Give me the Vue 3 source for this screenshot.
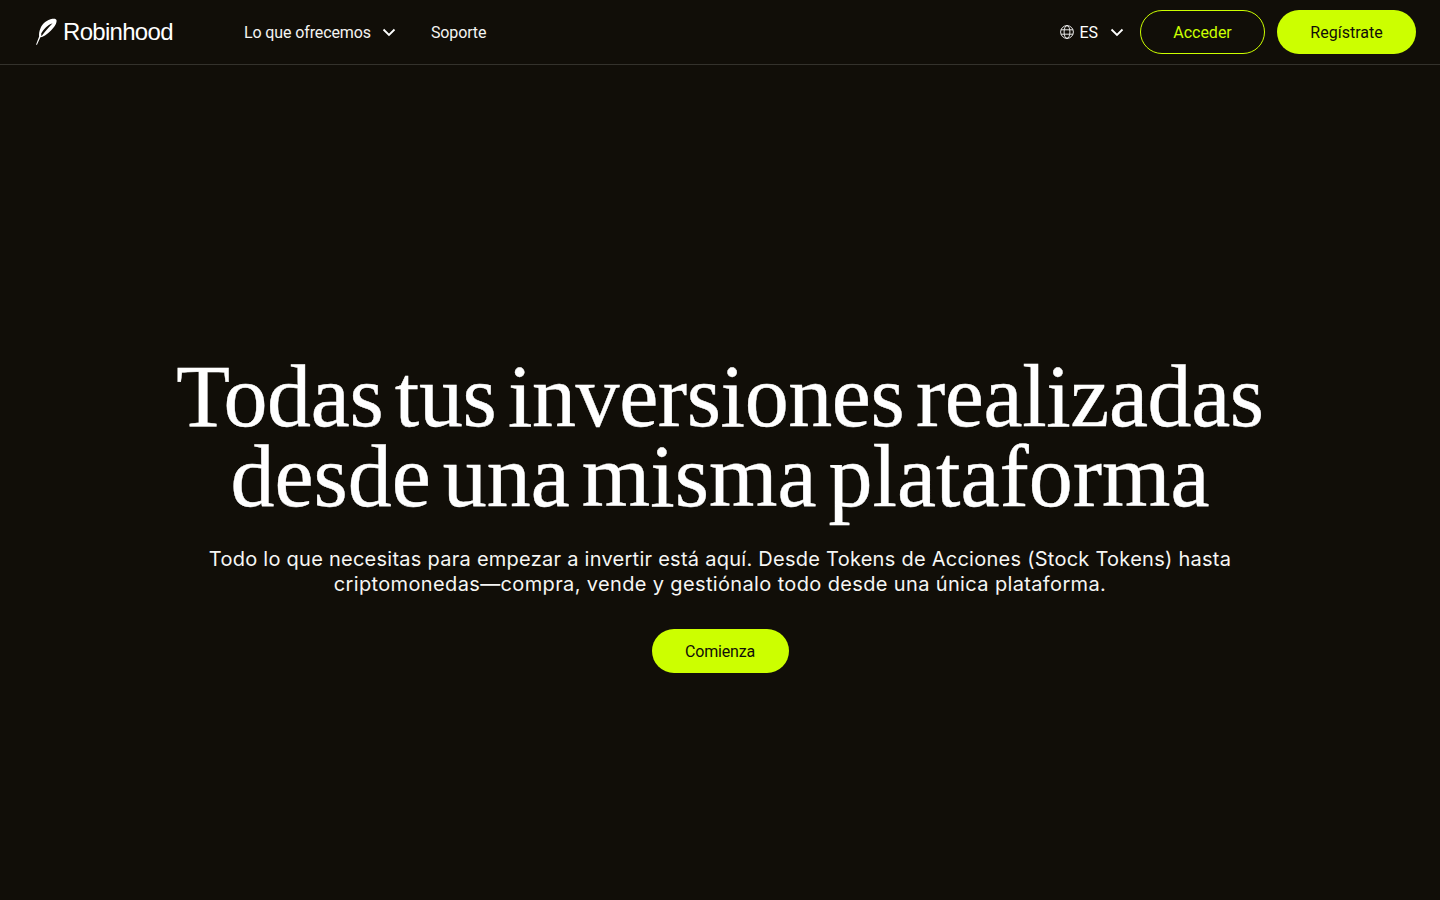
<script setup>
</script>

<template>
  <div class="page">
    <header class="nav">
      <div class="left">
        <a class="logo">
          <svg class="feather" width="30" height="32" viewBox="32 16 30 32" aria-hidden="true">
            <path fill-rule="evenodd" fill="#fff" d="M36 44.8 L39.1 36.4 C38.9 34.6 39 31.4 40.6 28 C42.6 23.6 47 19.8 52.4 18.8 C54.6 18.4 56.4 18.8 56.6 20.4 C56.8 22.2 55.6 25.2 53.2 28 C50.2 31.6 46 35.4 42 37 L40.4 37.2 L37 44.8 Z M41.4 36.2 C44.8 32 48.4 27.6 52.6 23.2 C48 24.6 43.6 29 41.2 33.6 Z"/>
          </svg>
          <span class="word">Robinhood</span>
        </a>
        <nav class="links">
          <a class="link">Lo que ofrecemos
            <svg class="chev" width="14" height="14" viewBox="0 0 14 14"><path d="M1.5 4.5 7 10l5.5-5.5" fill="none" stroke="#fff" stroke-width="1.8"/></svg>
          </a>
          <a class="link">Soporte</a>
        </nav>
      </div>
      <div class="right">
        <a class="lang">
          <svg class="globe" width="14" height="14" viewBox="0 0 14 14" fill="none" stroke="#fff" stroke-width="0.9"><circle cx="7" cy="7" r="6.4"/><ellipse cx="7" cy="7" rx="2.9" ry="6.4"/><path d="M1 4.8h12M1 9.2h12"/></svg>
          <span>ES</span>
          <svg class="chev-r" width="14" height="14" viewBox="0 0 14 14"><path d="M1.5 4.5 7 10l5.5-5.5" fill="none" stroke="#fff" stroke-width="1.8"/></svg>
        </a>
        <a class="btn outline">Acceder</a>
        <a class="btn solid">Regístrate</a>
      </div>
    </header>
    <main class="hero">
      <h1><span class="h-one">Todas tus inversiones realizadas</span><span class="h-two">desde una misma plataforma</span></h1>
      <p>Todo lo que necesitas para empezar a invertir está aquí. Desde Tokens de Acciones (Stock Tokens) hasta<br><span class="p-two">criptomonedas—compra, vende y gestiónalo todo desde una única plataforma.</span></p>
      <a class="btn solid cta">Comienza</a>
    </main>
  </div>
</template>

<style>
html, body { margin: 0; background: #110e08; }
</style>

<style scoped>
.page { height: 900px; background: #110e08; color: #fff; font-family: Roboto, "Liberation Sans", sans-serif; display: flex; flex-direction: column; overflow: hidden; }
.nav { height: 64px; border-bottom: 1px solid #34322c; display: flex; justify-content: space-between; align-items: center; padding: 0 24px 0 32px; flex: none; }
.left, .right, .links, .logo, .link, .lang { display: flex; align-items: center; }
.logo { width: 212px; gap: 1px; }
.word { font-family: "Liberation Sans", sans-serif; font-size: 24px; letter-spacing: -0.7px; color: #fff; }
.links { gap: 35px; font-size: 16px; letter-spacing: -0.12px; }
.link { gap: 11px; color: #f4f4f2; }
.right { font-size: 16px; }
.lang { gap: 5px; margin-right: 16px; }
.chev-r { margin-left: 7px; }
.btn { height: 44px; box-sizing: border-box; border-radius: 22px; display: flex; align-items: center; justify-content: center; font-size: 16px; }
.outline { width: 125px; border: 1px solid #ccff00; color: #ccff00; margin-right: 12px; }
.solid { width: 139px; background: #ccff00; color: #110e08; }
.hero { flex: 1; display: flex; flex-direction: column; align-items: center; justify-content: center; text-align: center; padding-top: 64px; }
h1 { margin: 0; font-family: "Liberation Serif", serif; font-weight: 400; font-size: 88px; line-height: 80px; word-spacing: -10px; color: #fff; -webkit-text-stroke: 0.4px #fff; }
.h-one, .h-two { display: block; }
.h-one { letter-spacing: -0.4px; }
p { margin: 30px 0 32px; font-family: Inter, sans-serif; font-size: 20px; line-height: 25px; letter-spacing: 0.26px; color: #f6f6f4; }
.p-two { letter-spacing: 0.36px; }
.cta { width: 137px; padding-top: 1px; letter-spacing: -0.2px; }
</style>
